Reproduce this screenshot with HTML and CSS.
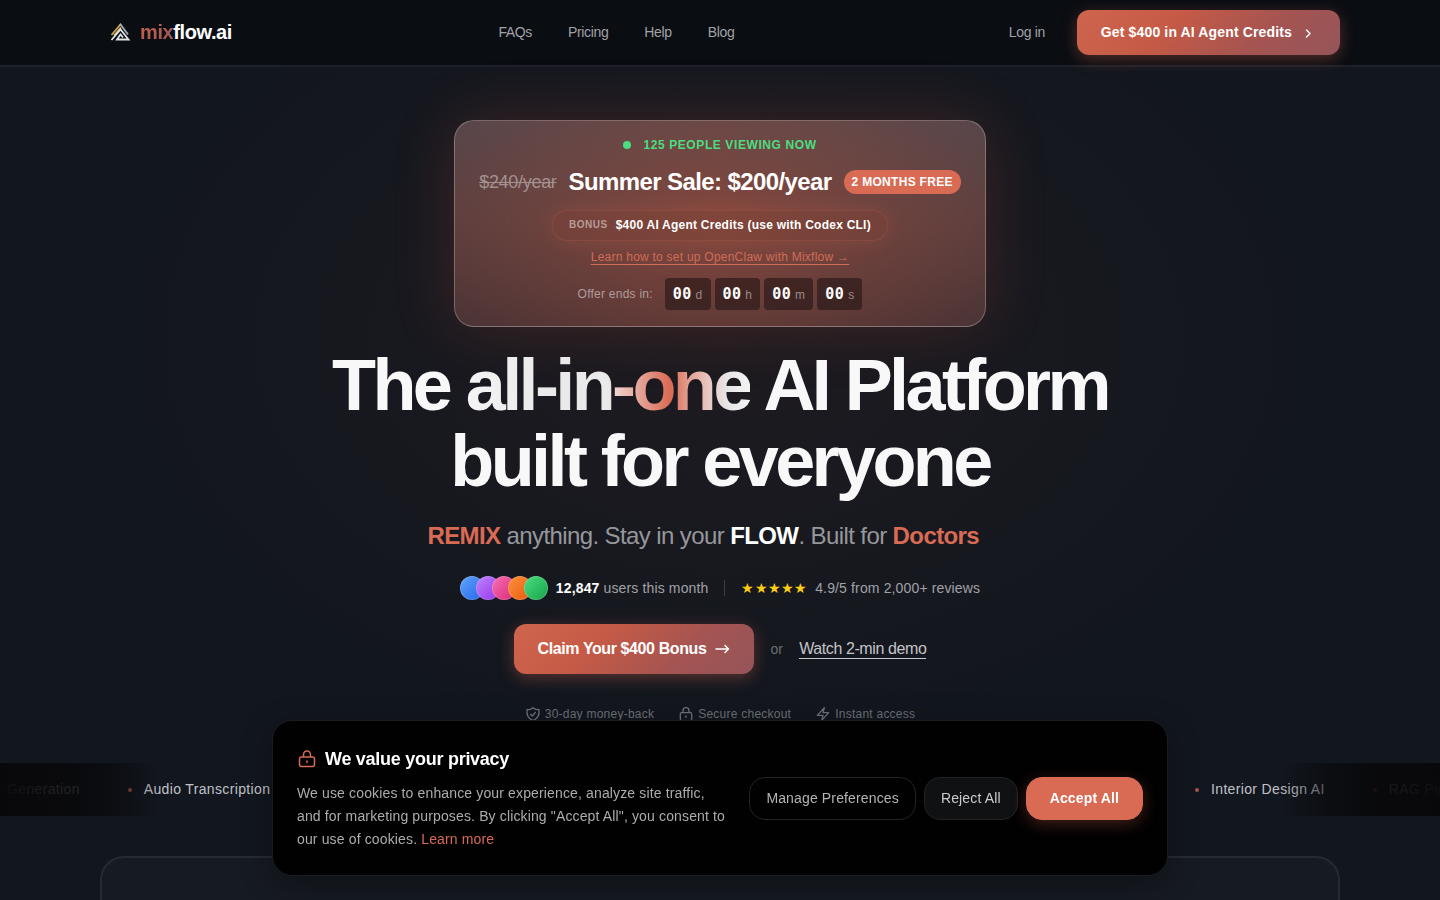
FILE: index.html
```html
<!DOCTYPE html>
<html lang="en">
<head>
  <meta charset="UTF-8" />
  <title>mixflow.ai - The all-in-one AI Platform</title>
  <meta name="viewport" content="width=device-width, initial-scale=1" />
  <link rel="stylesheet" href="styles.css">
</head>
<body>
  <header class="site-header">
    <div class="header-inner">
      <a class="logo" href="#">
        <svg width="24" height="24" viewBox="0 0 24 24" fill="none" stroke-width="1.800">
          <path d="M3.500 14L13 2.800" stroke="#c9a052" />
          <path d="M6 14.500L13 6.500" stroke="#d8b873" />
          <path d="M12 2.800L20 13.500" stroke="#a9afb5" />
          <path d="M3.500 19L12.500 8.500L20.500 18.500H9L12.500 13.500L15 16.500" stroke="#dfe3e6" />
        </svg>
        <span><span class="logo-mix">mix</span>flow.ai</span>
      </a>
      <nav class="nav">
        <a href="#">FAQs</a>
        <a href="#">Pricing</a>
        <a href="#">Help</a>
        <a href="#">Blog</a>
      </nav>
      <div class="header-actions">
        <a class="login" href="#">Log in</a>
        <button class="btn btn-header">
          Get $400 in AI Agent Credits
          <svg width="16" height="16" viewBox="0 0 16 16" fill="none" stroke="currentColor" stroke-width="1.400" stroke-linecap="round" stroke-linejoin="round"><path d="M6.500 5L10 8.500L6.500 12" /></svg>
        </button>
      </div>
    </div>
  </header>

  <main>
    <section class="hero">
      <div class="promo">
        <div class="viewing"><span class="dot"></span>125 PEOPLE VIEWING NOW</div>
        <div class="price">
          <s>$240/year</s>
          <strong>Summer Sale: $200/year</strong>
          <span class="badge">2 MONTHS FREE</span>
        </div>
        <div class="bonus"><span>BONUS</span><b>$400 AI Agent Credits (use with Codex CLI)</b></div>
        <a class="setup-link" href="#">Learn how to set up OpenClaw with Mixflow →</a>
        <div class="timer">
          <span class="timer-label">Offer ends in:</span>
          <div class="timer-boxes">
            <div class="timer-box"><b>00</b><span>d</span></div>
            <div class="timer-box"><b>00</b><span>h</span></div>
            <div class="timer-box"><b>00</b><span>m</span></div>
            <div class="timer-box"><b>00</b><span>s</span></div>
          </div>
        </div>
      </div>

      <h1>The <span class="shine">all-in-one</span> AI Platform<br>built for everyone</h1>

      <p class="tagline"><b class="accent">REMIX</b> anything. Stay in your <b class="white">FLOW</b>. Built for <b class="accent word">Doctors</b></p>

      <div class="social">
        <div class="avatars">
          <span class="avatar blue"></span>
          <span class="avatar purple"></span>
          <span class="avatar pink"></span>
          <span class="avatar orange"></span>
          <span class="avatar green"></span>
        </div>
        <span class="users"><b>12,847</b> users this month</span>
        <span class="divider"></span>
        <span class="stars">★★★★★</span>
        <span>4.9/5 from 2,000+ reviews</span>
      </div>

      <div class="cta">
        <button class="btn btn-claim">
          Claim Your $400 Bonus
          <svg width="16" height="16" viewBox="0 0 16 16" fill="none" stroke="currentColor" stroke-width="1.500" stroke-linecap="round" stroke-linejoin="round"><path d="M2 8H14.500M11 4.500L14.500 8L11 11.500" /></svg>
        </button>
        <span class="or">or</span>
        <a class="demo" href="#">Watch 2-min demo</a>
      </div>

      <ul class="trust">
        <li>
          <svg width="16" height="16" viewBox="0 0 24 24"><path d="M12 2.500C9.500 4.700 6.300 5.700 3 5.500C2.200 12.500 4.500 19 12 22C19.500 19 21.800 12.500 21 5.500C17.700 5.700 14.500 4.700 12 2.500ZM8.500 12.500L11 15L15.500 9.500" /></svg>
          30-day money-back
        </li>
        <li>
          <svg width="16" height="16" viewBox="0 0 24 24"><path d="M7.500 10V7a4.500 4.500 0 0 1 9 0v3M5.500 10h13a2 2 0 0 1 2 2v8a2 2 0 0 1-2 2h-13a2 2 0 0 1-2-2v-8a2 2 0 0 1 2-2ZM12 15v2" /></svg>
          Secure checkout
        </li>
        <li>
          <svg width="16" height="16" viewBox="0 0 24 24"><path d="M14 2.500L3.500 14H12l-2 7.500L20.500 10H12Z" /></svg>
          Instant access
        </li>
      </ul>
    </section>

    <div class="marquee">
      <ul class="marquee-start">
        <li>Generation</li>
        <li>Audio Transcription</li>
      </ul>
      <ul class="marquee-end">
        <li>Interior Design AI</li>
        <li>RAG Pipelines</li>
      </ul>
    </div>

    <section class="panel"></section>
  </main>

  <aside class="cookie">
    <div class="cookie-text">
      <h2>
        <svg width="20" height="20" viewBox="0 0 20 20"><path d="M6.500 8V5.500a3.500 3.500 0 0 1 7 0V8M4.500 8h11a2 2 0 0 1 2 2v5.500a2 2 0 0 1-2 2h-11a2 2 0 0 1-2-2V10a2 2 0 0 1 2-2ZM10 12v1.500" /></svg>
        We value your privacy
      </h2>
      <p>We use cookies to enhance your experience, analyze site traffic, and for marketing purposes. By clicking "Accept All", you consent to our use of cookies. <a href="#">Learn more</a></p>
    </div>
    <div class="cookie-actions">
      <button class="cookie-btn">Manage Preferences</button>
      <button class="cookie-btn reject">Reject All</button>
      <button class="cookie-btn accept">Accept All</button>
    </div>
  </aside>
</body>
</html>
```
FILE: styles.css
```css
:root {
  --bg: #12161e;
  --accent: #d96a54;
  --muted: #a1a1a6;
  --tight: -0.025em;
  --body: 0.01em;
  --small: 0.02em;
  --wide: 0.025em;
  --wider: 0.05em;
}
* {
  box-sizing: border-box;
}
body {
  margin: 0;
  height: 100vh;
  overflow: hidden;
  background: radial-gradient(ellipse 600px 400px at 50% 340px, #1e1b20, #16181f 70%, var(--bg));
  color: var(--muted);
  font-family: "Liberation Sans", Arial, sans-serif;
  font-size: 14px;
  line-height: 21px;
  letter-spacing: var(--body);
}
a {
  color: inherit;
  text-decoration: none;
}
ul {
  list-style: none;
  margin: 0;
  padding: 0;
}
button {
  font: inherit;
  letter-spacing: inherit;
  cursor: pointer;
}

/* header */
.site-header {
  background: #0a0d12;
  border-bottom: 2px solid #1d2129;
}
.header-inner {
  display: flex;
  justify-content: space-between;
  align-items: center;
  max-width: 1240px;
  height: 65px;
  margin: 0 auto;
}
.logo {
  display: flex;
  align-items: center;
  gap: 8px;
  padding-left: 8px;
  color: #fff;
  font-size: 20px;
  font-weight: bold;
  letter-spacing: -0.02em;
}
.logo-mix {
  background: linear-gradient(135deg, #c96149, #9c5658);
  -webkit-background-clip: text;
  background-clip: text;
  color: transparent;
}
.nav {
  display: flex;
  gap: 36px;
  letter-spacing: var(--tight);
}
.header-actions {
  display: flex;
  align-items: center;
  gap: 24px;
}
.login {
  padding: 8px;
  letter-spacing: var(--tight);
}
.btn {
  display: flex;
  align-items: center;
  gap: 8px;
  border: none;
  border-radius: 12px;
  padding: 12px 24px;
  background: linear-gradient(135deg, #d0654e 0%, #c55a46 35%, #a45452 70%, #955559 100%);
  box-shadow: 0 4px 16px rgba(217, 106, 84, 0.35);
  color: #fff;
  font-weight: bold;
}
.btn-header {
  letter-spacing: var(--body);
}

/* hero */
.hero {
  display: flex;
  flex-direction: column;
  align-items: center;
  padding-top: 53px;
}
.promo {
  display: flex;
  flex-direction: column;
  align-items: center;
  padding: 16px 24px;
  border: 1px solid rgba(255, 255, 255, 0.25);
  border-radius: 20px;
  background:
    radial-gradient(ellipse 60% 90% at 50% 50%, rgba(165, 78, 60, 0.55), transparent),
    linear-gradient(180deg, #57464a 0%, #583e3e 50%, #4a3335 100%);
  box-shadow: 0 0 60px rgba(190, 80, 60, 0.22);
  font-size: 12px;
  line-height: 16px;
}
.viewing {
  display: flex;
  align-items: center;
  gap: 12px;
  color: #4ade80;
  font-weight: bold;
  letter-spacing: var(--wider);
}
.dot {
  width: 8px;
  height: 8px;
  border-radius: 50%;
  background: #4ade80;
}
.price {
  display: flex;
  align-items: center;
  gap: 12px;
  margin: 13px 0 12px;
  line-height: 32px;
  letter-spacing: var(--tight);
}
.price s {
  color: #a3908f;
  font-size: 18px;
}
.price strong {
  color: #fff;
  font-size: 24px;
  letter-spacing: var(--tight);
}
.badge {
  padding: 4px 8px;
  border-radius: 12px;
  background: var(--accent);
  color: #fff;
  font-weight: bold;
  line-height: 16px;
  letter-spacing: var(--wide);
}
.bonus {
  display: flex;
  align-items: center;
  gap: 8px;
  padding: 6px 16px 7px;
  border: 1px solid rgba(217, 106, 84, 0.2);
  border-radius: 16px;
  background: rgba(130, 65, 55, 0.35);
  box-shadow: 0 0 20px rgba(217, 106, 84, 0.2);
  letter-spacing: var(--small);
}
.bonus span {
  color: #b59c99;
  font-size: 10px;
  font-weight: bold;
  letter-spacing: var(--wider);
}
.bonus b {
  color: #fff;
}
.setup-link {
  margin: 8px 0 13px;
  color: #d06c58;
  text-decoration: underline;
  text-underline-offset: 3px;
  letter-spacing: var(--small);
}
.timer {
  display: flex;
  align-items: center;
  gap: 12px;
  letter-spacing: var(--small);
}
.timer-label {
  color: #b09b99;
}
.timer-boxes {
  display: flex;
  gap: 4px;
}
.timer-box {
  display: flex;
  align-items: baseline;
  gap: 4px;
  height: 32px;
  padding: 4px 8px;
  border-radius: 4px;
  background: rgba(35, 20, 20, 0.6);
  color: #9b8a89;
  line-height: 24px;
}
.timer-box b {
  color: #fff;
  font-family: "DejaVu Sans Mono", monospace;
  font-size: 15px;
  letter-spacing: var(--wide);
}
h1 {
  margin: 20px 0 21px;
  color: #f8f8f8;
  font-size: 72px;
  line-height: 76px;
  letter-spacing: -0.05em;
  text-align: center;
}
.shine {
  background: linear-gradient(90deg, #f4f4f4 0%, #e9e9e9 30%, #eaeaea 50%, #ecc4bc 55%, #e39f92 62%, var(--accent) 72%, #e29c8e 78%, #e8d0cc 87%, #e6e6e6 92%, #f4f4f4 100%);
  -webkit-background-clip: text;
  background-clip: text;
  color: transparent;
}
.tagline {
  margin: 0 0 24px;
  color: #96979b;
  font-size: 24px;
  line-height: 32px;
  letter-spacing: var(--tight);
}
.accent {
  color: var(--accent);
}
.white {
  color: #fff;
}
.word {
  display: inline-block;
  min-width: 120px;
}
.social {
  display: flex;
  align-items: center;
  height: 24px;
  gap: 8px;
  line-height: 20px;
}
.avatars {
  display: flex;
}
.avatar {
  width: 24px;
  height: 24px;
  border: 1px solid rgba(255, 255, 255, 0.2);
  border-radius: 50%;
}
.avatar + .avatar {
  margin-left: -8px;
}
.blue { background: linear-gradient(135deg, #60a5fa, #2563eb) border-box; }
.purple { background: linear-gradient(135deg, #c084fc, #9333ea) border-box; }
.pink { background: linear-gradient(135deg, #f472b6, #db2777) border-box; }
.orange { background: linear-gradient(135deg, #fb923c, #ea580c) border-box; }
.green { background: linear-gradient(135deg, #4ade80, #16a34a) border-box; }
.users b {
  color: #fff;
}
.divider {
  width: 1px;
  height: 16px;
  margin: 0 8px;
  background: #3b3e45;
}
.stars {
  color: #facc15;
}
.cta {
  display: flex;
  align-items: center;
  gap: 16px;
  margin: 24px 0 32px;
}
.btn-claim {
  height: 50px;
  font-size: 16px;
  line-height: 24px;
  letter-spacing: var(--tight);
}
.or {
  color: #6d6f75;
}
.demo {
  border-bottom: 1px solid #c8c9cc;
  color: #c3c4c8;
  font-size: 16px;
  line-height: 18px;
  letter-spacing: var(--tight);
}
.trust {
  display: flex;
  gap: 24px;
  color: #6d7077;
  font-size: 12px;
  line-height: 16px;
  letter-spacing: var(--small);
}
.trust li {
  display: flex;
  align-items: center;
  gap: 4px;
}
.trust svg {
  fill: none;
  stroke: currentColor;
  stroke-width: 2;
  stroke-linecap: round;
  stroke-linejoin: round;
}

/* feature marquee */
.marquee {
  position: relative;
  display: flex;
  justify-content: space-between;
  overflow: hidden;
  margin-top: 41px;
  padding: 16px 0;
  color: #c0c2c8;
  white-space: nowrap;
  letter-spacing: var(--wide);
}
.marquee::before,
.marquee::after {
  content: "";
  position: absolute;
  top: 0;
  bottom: 0;
  width: 160px;
  z-index: 1;
}
.marquee::before {
  left: 0;
  background: linear-gradient(90deg, rgba(8, 8, 10, 0.97), rgba(8, 8, 10, 0.84) 50%, rgba(8, 8, 10, 0.6) 70%, transparent);
}
.marquee::after {
  right: 0;
  background: linear-gradient(270deg, rgba(8, 8, 10, 0.97), rgba(8, 8, 10, 0.9) 40%, rgba(8, 8, 10, 0.6) 70%, transparent);
}
.marquee ul {
  display: flex;
  gap: 48px;
}
.marquee-start {
  margin-left: -9px;
}
.marquee-end {
  width: 245px;
}
.marquee li {
  display: flex;
  align-items: center;
  gap: 12px;
}
.marquee li::before {
  content: "";
  width: 4px;
  height: 4px;
  border-radius: 50%;
  background: #a8544c;
}
.panel {
  max-width: 1240px;
  height: 400px;
  margin: 40px auto 0;
  border: 2px solid #262a32;
  border-radius: 24px;
  background: #161a21;
}

/* cookie banner */
.cookie {
  position: fixed;
  bottom: 24px;
  left: 0;
  right: 0;
  display: flex;
  align-items: center;
  gap: 24px;
  max-width: 896px;
  margin: 0 auto;
  padding: 24px;
  border: 1px solid #1c1d20;
  border-radius: 20px;
  background: #010102;
  box-shadow: 0 8px 32px rgba(0, 0, 0, 0.3);
  z-index: 10;
}
.cookie-text {
  flex: 1;
}
.cookie h2 {
  display: flex;
  align-items: center;
  gap: 8px;
  margin: 0 0 9px;
  color: #fff;
  font-size: 18px;
  line-height: 28px;
  letter-spacing: -0.015em;
}
.cookie h2 svg {
  fill: none;
  stroke: var(--accent);
  stroke-width: 1.5;
  stroke-linecap: round;
}
.cookie p {
  margin: 0;
  color: #acacae;
  line-height: 23px;
}
.cookie p a {
  color: var(--accent);
}
.cookie-actions {
  display: flex;
  gap: 8px;
}
.cookie-btn {
  padding: 10px 16px;
  border: 1px solid #222325;
  border-radius: 16px;
  background: transparent;
  color: #b4b4b6;
  white-space: nowrap;
}
.cookie-btn.reject {
  background: #101112;
  color: #ccc;
}
.cookie-btn.accept {
  padding: 10px 23px;
  border-color: var(--accent);
  background: var(--accent);
  box-shadow: 0 4px 16px rgba(217, 106, 84, 0.3);
  color: #fff;
  font-weight: bold;
}
```
